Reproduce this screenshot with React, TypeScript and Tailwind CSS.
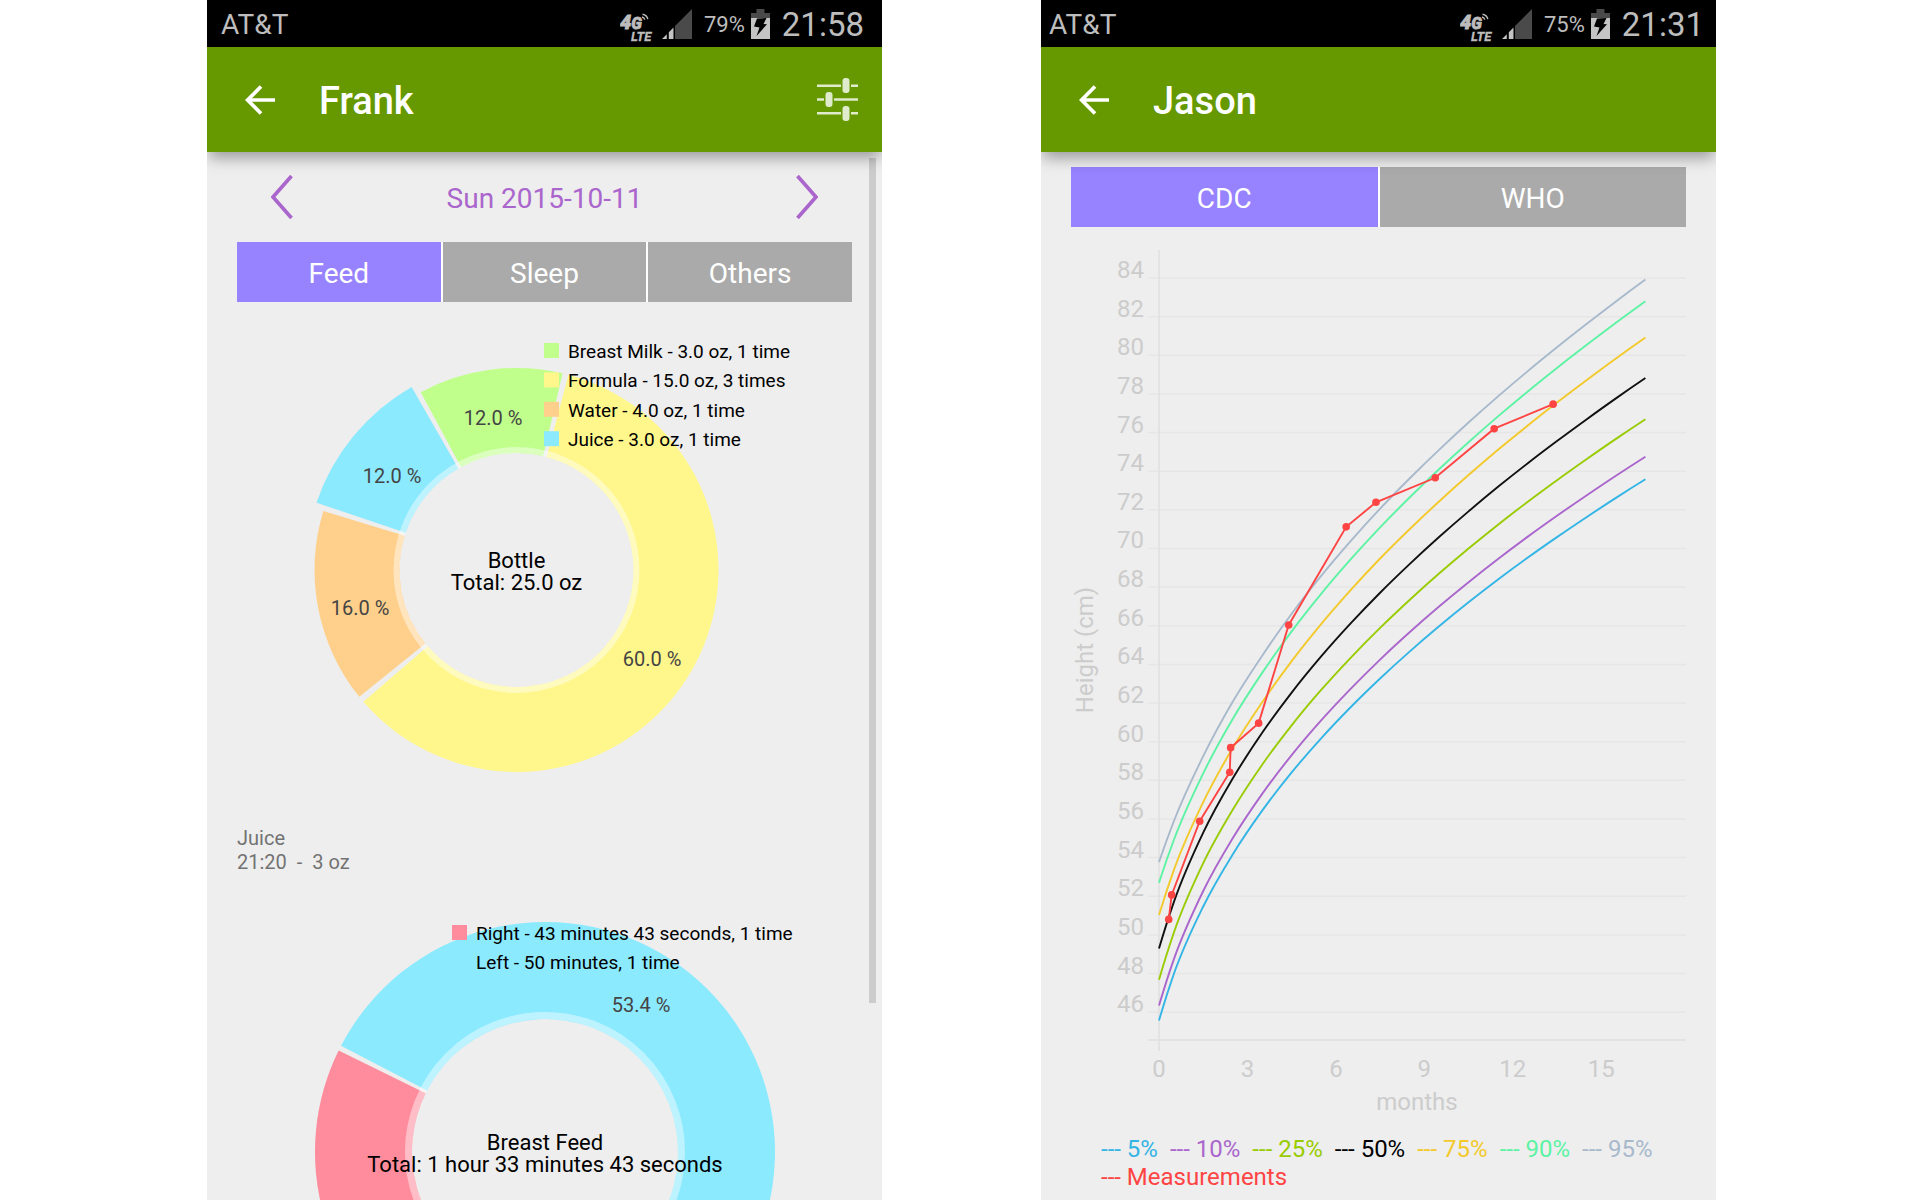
/**
 * Baby tracker — daily feed summary and growth curve, one phone screen each.
 * Charts are plain SVG and scale with the width of their screen.
 */
import React, { useState } from 'react';

type Slice = { from: number; to: number; color: string; r?: number; pct?: string; px?: number; py?: number };
type LegendRow = { label: string; color: string };

const polar = (cx: number, cy: number, r: number, deg: number) => {
  const a = (deg * Math.PI) / 180;
  return `${(cx + r * Math.sin(a)).toFixed(2)} ${(cy - r * Math.cos(a)).toFixed(2)}`;
};

// ring segment, angles clockwise from 12 o'clock
const arcPath = (cx: number, cy: number, r0: number, r1: number, from: number, to: number) => {
  const large = to - from > 180 ? 1 : 0;
  return `M${polar(cx, cy, r1, from)}A${r1} ${r1} 0 ${large} 1 ${polar(cx, cy, r1, to)}L${polar(cx, cy, r0, to)}A${r0} ${r0} 0 ${large} 0 ${polar(cx, cy, r0, from)}Z`;
};

const BOTTLE: Slice[] = [
  { from: 331.7, to: 373.2, color: '#c0ff8c', pct: '12.0 %', px: 286, py: 123 },
  { from: 14.9, to: 229.3, color: '#fff78c', pct: '60.0 %', px: 445, py: 364 },
  { from: 231.1, to: 287, color: '#ffd08c', pct: '16.0 %', px: 153, py: 313 },
  { from: 288.6, to: 330.2, color: '#8ceaff', r: 211, pct: '12.0 %', px: 185, py: 181 },
];
const BOTTLE_LEGEND: LegendRow[] = [
  { label: 'Breast Milk - 3.0 oz, 1 time', color: '#c0ff8c' },
  { label: 'Formula - 15.0 oz, 3 times', color: '#fff78c' },
  { label: 'Water - 4.0 oz, 1 time', color: '#ffd08c' },
  { label: 'Juice - 3.0 oz, 1 time', color: '#8ceaff' },
];

const BREAST: Slice[] = [
  { from: 129.8, to: 296.2, color: '#ff8c9d' },
  { from: 297.5, to: 488.4, color: '#8ceaff', pct: '53.4 %', px: 434, py: 138 },
];
const BREAST_LEGEND: LegendRow[] = [
  { label: 'Right - 43 minutes 43 seconds, 1 time', color: '#ff8c9d' },
  { label: 'Left - 50 minutes, 1 time', color: '#8ceaff' },
];

const MONTHS = [0, 0.5, 1.5, 2.5, 3.5, 4.5, 5.5, 6.5, 7.5, 8.5, 9.5, 10.5, 11.5, 12.5, 13.5, 14.5, 15.5, 16.5];
const MEDIAN = [49.29, 51.68, 55.29, 58.09, 60.46, 62.54, 64.41, 66.12, 67.71, 69.19, 70.59, 71.92, 73.19, 74.4, 75.56, 76.68, 77.77, 78.82];

// distance from the median in cm, at KNOTS months
const KNOTS = [0, 0.5, 1.5, 3.5, 7.5, 16.5];
const PERCENTILES = [
  { label: '5%', color: '#33b5e5', text: 'text-[#33b5e5]', spread: [-3.72, -3.72, -3.82, -4.03, -4.44, -5.24] },
  { label: '10%', color: '#aa66cc', text: 'text-[#aa66cc]', spread: [-2.95, -2.96, -3.02, -3.16, -3.46, -4.07] },
  { label: '25%', color: '#99cc00', text: 'text-[#99cc00]', spread: [-1.61, -1.58, -1.58, -1.65, -1.82, -2.13] },
  { label: '50%', color: '#111111', text: 'text-black', spread: [0, 0, 0, 0, 0, 0] },
  { label: '75%', color: '#f3c92b', text: 'text-[#f3c92b]', spread: [1.74, 1.66, 1.58, 1.58, 1.77, 2.1] },
  { label: '90%', color: '#5df3a4', text: 'text-[#5df3a4]', spread: [3.41, 3.22, 3.07, 3.1, 3.38, 3.98] },
  { label: '95%', color: '#a8b9cc', text: 'text-[#a8b9cc]', spread: [4.48, 4.19, 3.96, 3.99, 4.35, 5.1] },
];

const MEASURED: [number, number][] = [
  [0.33, 50.8], [0.43, 52.07], [1.38, 55.88], [2.4, 58.42], [2.43, 59.69], [3.38, 60.96],
  [4.4, 66.04], [6.35, 71.12], [7.36, 72.39], [9.37, 73.66], [11.37, 76.2], [13.37, 77.47],
];

const mx = (m: number) => 118 + m * 29.48;
const cy = (cm: number) => 51 + (84 - cm) * 19.32;

const lerp = (t: number, ys: number[]) => {
  let i = 0;
  while (i < KNOTS.length - 2 && t > KNOTS[i + 1]) i++;
  return ys[i] + ((ys[i + 1] - ys[i]) * (t - KNOTS[i])) / (KNOTS[i + 1] - KNOTS[i]);
};

const curvePath = (spread: number[]) => {
  const pts = MONTHS.map((m, i) => [mx(m), cy(MEDIAN[i] + lerp(m, spread))]);
  const last = pts.length - 1;
  const chord = (i: number) => (pts[i + 1][1] - pts[i][1]) / (pts[i + 1][0] - pts[i][0]);
  // samples are unevenly spaced, so weight the chords by the opposite step
  const slope = pts.map((_, i) => {
    if (i === 0 || i === last) return 0;
    const h0 = pts[i][0] - pts[i - 1][0], h1 = pts[i + 1][0] - pts[i][0];
    return (chord(i - 1) * h1 + chord(i) * h0) / (h0 + h1);
  });
  slope[0] = 2 * chord(0) - slope[1];
  slope[last] = 2 * chord(last - 1) - slope[last - 1];
  let d = `M${pts[0][0]} ${pts[0][1]}`;
  for (let i = 1; i < pts.length; i++) {
    const [x0, y0] = pts[i - 1], [x1, y1] = pts[i];
    const h = (x1 - x0) / 3;
    d += `C${x0 + h} ${y0 + slope[i - 1] * h} ${x1 - h} ${y1 - slope[i] * h} ${x1} ${y1}`;
  }
  return d;
};

const NetworkIcon = () => (
  <svg width="34" height="30" viewBox="0 0 34 30" fill="#bdbdbd" stroke="#bdbdbd" className="shrink-0">
    <text x="0" y="16" fontSize="20" fontWeight="900" fontStyle="italic" strokeWidth="0.8">4<tspan fontSize="16">G</tspan></text>
    <text x="11" y="28" fontSize="13" fontWeight="700" fontStyle="italic" strokeWidth="0.3">LTE</text>
    <path d="M22 4q2.300 .6 2.800 2.600M22.500 1.200q4.500 .8 5.300 5" fill="none" strokeWidth="1.400" />
  </svg>
);

const SignalIcon = () => (
  <svg width="30" height="30" viewBox="0 0 30 30" className="shrink-0">
    <path d="M13 17L30 0V30H13Z" fill="#4a4a4a" />
    <path d="M0 30L4.800 25.200V30ZM6.800 23.200L11.500 18.500V30H6.800Z" fill="#c4c4c4" />
  </svg>
);

const BatteryIcon = () => (
  <svg width="19" height="30" viewBox="0 0 19 30" className="shrink-0">
    <path d="M5.500 0H13.500V4H19V9H0V4H5.500Z" fill="#4a4a4a" />
    <path d="M0 9H19V30H0Z" fill="#c4c4c4" />
    <path d="M6 9.500L15.500 9L12.500 15L16 15.300L5.500 27L8.500 18.500L3 17.500Z" fill="#000" />
  </svg>
);

const StatusBar = ({ percent, time, className }: { percent: string; time: string; className: string }) => (
  <div className={`flex h-[47px] shrink-0 items-center bg-black pt-0.5 leading-none text-[#bdbdbd] ${className}`}>
    <span className="flex-1 text-[28px]">AT&amp;T</span>
    <span className="mt-1.5 flex items-center"><NetworkIcon /></span>
    <span className="ml-2 -mt-0.5 flex items-center"><SignalIcon /></span>
    <span className="ml-3 text-[22px]">{percent}</span>
    <span className="mr-3 ml-1.5 -mt-0.5 flex items-center"><BatteryIcon /></span>
    <span className="text-[33px]">{time}</span>
  </div>
);

const AppBar = ({ title, children }: { title: string; children?: React.ReactNode }) => (
  <header className="relative z-10 flex h-[105px] shrink-0 items-center bg-[#669900] pr-6 pl-[38px] shadow-[0_8px_14px_-2px_rgba(0,0,0,0.35)]">
    <button type="button" aria-label="Back">
      <svg width="30" height="30" viewBox="0 0 30 30" fill="none" stroke="#fff" strokeWidth="3.700">
        <path d="M30 15H3M16 1.500L2.600 15L16 28.500" />
      </svg>
    </button>
    <h1 className="ml-11 flex-1 pt-0.5 text-[38px] leading-none font-medium text-white">{title}</h1>
    {children}
  </header>
);

const Tabs = ({ items }: { items: string[] }) => {
  const [active, setActive] = useState(items[0]);
  return (
    <div role="tablist" className="mx-[30px] flex shrink-0 gap-0.5 bg-white">
      {items.map(t => (
        <button
          key={t}
          type="button"
          role="tab"
          aria-selected={t === active}
          onClick={() => setActive(t)}
          className={`h-[60px] flex-1 pt-1 text-[28px] leading-none text-white ${t === active ? 'bg-[#9782ff]' : 'bg-[#aaaaaa]'}`}
        >
          {t}
        </button>
      ))}
    </div>
  );
};

const Donut = ({ cx, cy, r, hole, ring, height, slices, legend, legendX, legendY, title, total }: {
  cx: number; cy: number; r: number; hole: number; ring: number; height: number;
  slices: Slice[]; legend: LegendRow[]; legendX: number; legendY: number; title: string; total: string;
}) => (
  <svg viewBox={`0 0 675 ${height}`} className="block w-full shrink-0">
    {slices.map(s => (
      <path key={s.from} d={arcPath(cx, cy, hole, s.r ?? r, s.from, s.to)} fill={s.color} />
    ))}
    <circle cx={cx} cy={cy} r={(hole + ring) / 2} fill="none" stroke="#fff" strokeOpacity="0.430" strokeWidth={ring - hole} />
    {slices.map(s => s.pct && (
      <text key={s.from} x={s.px} y={s.py} textAnchor="middle" fontSize="20" fill="#444">{s.pct}</text>
    ))}
    {legend.map((l, i) => (
      <g key={l.label}>
        <rect x={legendX} y={legendY + i * 29.4} width="15" height="15" fill={l.color} />
        <text x={legendX + 24} y={legendY + 15 + i * 29.4} fontSize="19">{l.label}</text>
      </g>
    ))}
    <text x={cx} y={cy - 2} textAnchor="middle" fontSize="22">{title}</text>
    <text x={cx} y={cy + 20} textAnchor="middle" fontSize="22">{total}</text>
  </svg>
);

const Chevron = ({ d, label }: { d: string; label: string }) => (
  <button type="button" aria-label={label}>
    <svg width="22" height="44" viewBox="0 0 22 44" fill="none" stroke="#aa66cc" strokeWidth="3.700"><path d={d} /></svg>
  </button>
);

const DailyScreen = () => (
  <section className="relative flex min-w-0 flex-1 flex-col overflow-hidden bg-[#eeeeee]">
    <StatusBar percent="79%" time="21:58" className="pl-3.5 pr-[18px]" />
    <AppBar title="Frank">
      <button type="button" aria-label="Filter">
        <svg width="41" height="43" viewBox="0 0 41 43" fill="#e0ebcc">
          <path d="M0 6.500H24V9H0ZM34 6.500H41V9H34ZM0 20.300H7V22.800H0ZM17 20.300H41V22.800H17ZM0 34H24V36.500H0ZM34 34H41V36.500H34Z" />
          <rect x="25.500" y="0" width="7" height="15" rx="3" />
          <rect x="8.500" y="14" width="7" height="15" rx="3" />
          <rect x="25.500" y="28" width="7" height="15" rx="3" />
        </svg>
      </button>
    </AppBar>
    <div className="flex h-[90px] shrink-0 items-center justify-between px-16 text-[#aa66cc]">
      <Chevron label="Previous day" d="M20.500 1L2 22L20.500 43" />
      <span className="pt-1 text-[28px] leading-none">Sun 2015-10-11</span>
      <Chevron label="Next day" d="M1.500 1L20 22L1.500 43" />
    </div>
    <Tabs items={['Feed', 'Sleep', 'Others']} />
    <Donut
      cx={309.5} cy={268} r={202} hole={117} ring={123} height={524}
      slices={BOTTLE} legend={BOTTLE_LEGEND} legendX={337} legendY={41}
      title="Bottle" total="Total: 25.0 oz"
    />
    <div className="shrink-0 px-[30px] text-[20px] leading-6 text-[#737373]">
      <p>Juice</p>
      <p className="whitespace-pre">21:20  -  3 oz</p>
    </div>
    <Donut
      cx={338} cy={278} r={230} hole={133} ring={140} height={540}
      slices={BREAST} legend={BREAST_LEGEND} legendX={245} legendY={51}
      title="Breast Feed" total="Total: 1 hour 33 minutes 43 seconds"
    />
    <div className="absolute top-[158px] right-1.5 h-[845px] w-[7px] bg-[#cccccc]" />
  </section>
);

const GrowthChart = () => {
  const rows = Array.from({ length: 20 }, (_, i) => 46 + i * 2);
  return (
    <svg viewBox="0 0 675 908" className="block w-full shrink-0" fill="#cccccc" fontSize="24">
      {rows.map(v => (
        <g key={v}>
          <path d={`M107 ${cy(v)}H645`} stroke="#e6e6e6" strokeWidth="1.500" />
          <text x="103" y={cy(v)} textAnchor="end">{v}</text>
        </g>
      ))}
      <path d="M107 813H645M118 23V824" stroke="#e0e0e0" strokeWidth="1.500" />
      {[0, 3, 6, 9, 12, 15].map(m => (
        <text key={m} x={mx(m)} y="850" textAnchor="middle">{m}</text>
      ))}
      <text x="376" y="883" textAnchor="middle">months</text>
      <text transform="translate(52 423) rotate(-90)" textAnchor="middle">Height (cm)</text>
      {PERCENTILES.map(p => (
        <path key={p.label} d={curvePath(p.spread)} fill="none" stroke={p.color} strokeWidth="1.900" />
      ))}
      <path d={'M' + MEASURED.map(([m, v]) => `${mx(m)} ${cy(v)}`).join('L')} fill="none" stroke="#ff4444" strokeWidth="1.900" />
      {MEASURED.map(([m, v]) => <circle key={m} cx={mx(m)} cy={cy(v)} r="3.800" fill="#ff4444" />)}
    </svg>
  );
};

const GrowthScreen = () => (
  <section className="relative flex min-w-0 flex-1 flex-col overflow-hidden bg-[#eeeeee]">
    <StatusBar percent="75%" time="21:31" className="pl-2 pr-3" />
    <AppBar title="Jason" />
    <div className="h-[15px] shrink-0" />
    <Tabs items={['CDC', 'WHO']} />
    <GrowthChart />
    <ul className="flex shrink-0 flex-wrap gap-x-3 pr-10 pl-[60px] text-[24px] leading-7">
      {PERCENTILES.map(p => <li key={p.label} className={p.text}>--- {p.label}</li>)}
      <li className="text-[#ff4444]">--- Measurements</li>
    </ul>
  </section>
);

export default function App() {
  return (
    <main className="flex h-screen gap-[159px] overflow-hidden bg-white pr-[204px] pl-[207px] font-['Roboto',sans-serif]">
      <DailyScreen />
      <GrowthScreen />
    </main>
  );
}
